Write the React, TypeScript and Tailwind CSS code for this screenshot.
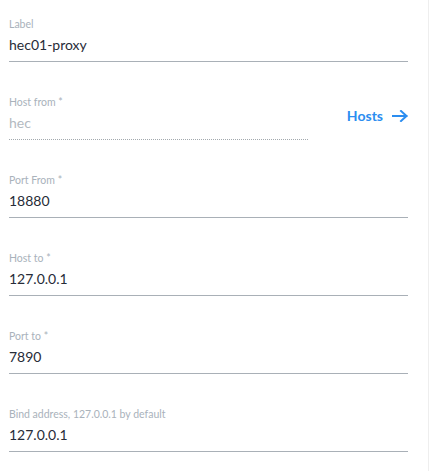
import type { ReactNode } from "react";

type FieldProps = {
  label: string;
  value: string;
  muted?: boolean;
  dotted?: boolean;
  width?: string;
};

function Field({ label, value, muted, dotted, width = "w-[399px]" }: FieldProps) {
  return (
    <div className={width}>
      <p className="text-[10.5px] leading-[14px] text-[#a9b2bb]">{label}</p>
      <div
        className={`mt-[3px] pb-[5px] border-b ${
          dotted ? "border-dotted border-[#a3a9ae]" : "border-solid border-[#a9b0b7]"
        }`}
      >
        <p
          className={`text-[14px] leading-[22px] ${
            muted ? "text-[#b3bac1]" : "text-[#272c38]"
          }`}
        >
          {value}
        </p>
      </div>
    </div>
  );
}

function Row({ children }: { children: ReactNode }) {
  return <div className="flex w-[399px] items-end">{children}</div>;
}

export default function App() {
  return (
    <div
      className="h-[471px] w-[429px] border-r border-[#eeeeee] bg-white"
      style={{ fontFamily: "Lato, 'Open Sans', sans-serif" }}
    >
      <div className="flex flex-col gap-[33px] px-[9px] pt-[17px]">
        <Field label="Label" value="hec01-proxy" />

        <Row>
          <Field label="Host from *" value="hec" muted dotted width="w-[299px]" />
          <button
            type="button"
            className="mb-[14px] ml-auto flex items-center gap-[9px] text-[14px] font-bold leading-[20px] text-[#2b8df0]"
          >
            Hosts
            <svg width="16" height="12" viewBox="0 0 16 12" fill="none">
              <path
                d="M0.5 6H14.5M9 1L14.5 6L9 11"
                stroke="#2b8df0"
                strokeWidth="2"
                strokeLinecap="square"
              />
            </svg>
          </button>
        </Row>

        <Field label="Port From *" value="18880" />
        <Field label="Host to *" value="127.0.0.1" />
        <Field label="Port to *" value="7890" />
        <Field label="Bind address, 127.0.0.1 by default" value="127.0.0.1" />
      </div>
    </div>
  );
}
